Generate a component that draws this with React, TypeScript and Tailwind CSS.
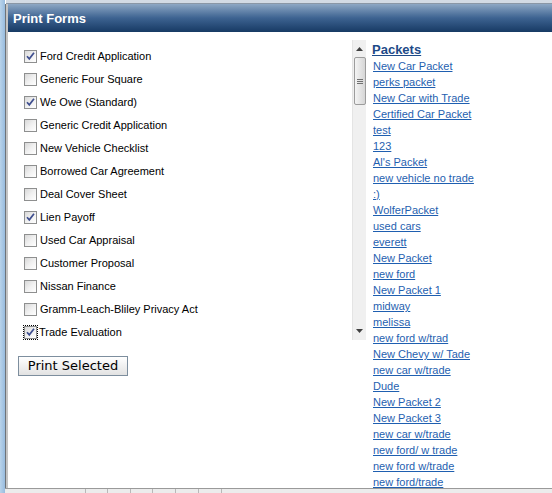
import React from "react";

const forms: { label: string; checked: boolean; focus?: boolean }[] = [
  { label: "Ford Credit Application", checked: true },
  { label: "Generic Four Square", checked: false },
  { label: "We Owe (Standard)", checked: true },
  { label: "Generic Credit Application", checked: false },
  { label: "New Vehicle Checklist", checked: false },
  { label: "Borrowed Car Agreement", checked: false },
  { label: "Deal Cover Sheet", checked: false },
  { label: "Lien Payoff", checked: true },
  { label: "Used Car Appraisal", checked: false },
  { label: "Customer Proposal", checked: false },
  { label: "Nissan Finance", checked: false },
  { label: "Gramm-Leach-Bliley Privacy Act", checked: false },
  { label: "Trade Evaluation", checked: true, focus: true },
];

const packets = [
  "New Car Packet",
  "perks packet",
  "New Car with Trade",
  "Certified Car Packet",
  "test",
  "123",
  "Al's Packet",
  "new vehicle no trade",
  ":)",
  "WolferPacket",
  "used cars",
  "everett",
  "New Packet",
  "new ford",
  "New Packet 1",
  "midway",
  "melissa",
  "new ford w/trad",
  "New Chevy w/ Tade",
  "new car w/trade",
  "Dude",
  "New Packet 2",
  "New Packet 3",
  "new car w/trade",
  "new ford/ w trade",
  "new ford w/trade",
  "new ford/trade",
];

function Checkbox({ checked }: { checked: boolean }) {
  return (
    <span className="relative block w-[13px] h-[13px] shrink-0 border border-[#8e8f8f] bg-gradient-to-br from-[#d8d8d8] via-[#f0f0f0] to-white">
      {checked && (
        <svg width="11" height="11" viewBox="0 0 11 11" className="absolute left-0 top-0">
          <path d="M2 5.2 L4.3 7.8 L9 1.8" fill="none" stroke="#3f4f8f" strokeWidth="1.7" />
        </svg>
      )}
    </span>
  );
}

function Scrollbar() {
  return (
    <div className="w-[14px] h-full flex flex-col items-center bg-[#f0f0f0] border-l border-[#e4e4e4]">
      <div className="h-[17px] w-full flex items-center justify-center">
        <svg width="7" height="4" viewBox="0 0 7 4">
          <path d="M0 4 L3.5 0 L7 4 Z" fill="#404040" />
        </svg>
      </div>
      <div className="w-[12px] h-[48px] rounded-[2px] border border-[#9c9c9c] bg-gradient-to-r from-[#f4f4f4] to-[#d6d6d6] flex flex-col items-center justify-center gap-[1px]">
        <span className="block w-[6px] h-[1px] bg-[#707070]" />
        <span className="block w-[6px] h-[1px] bg-[#707070]" />
        <span className="block w-[6px] h-[1px] bg-[#707070]" />
      </div>
      <div className="flex-1" />
      <div className="h-[18px] w-full flex items-center justify-center">
        <svg width="7" height="4" viewBox="0 0 7 4">
          <path d="M0 0 L3.5 4 L7 0 Z" fill="#404040" />
        </svg>
      </div>
    </div>
  );
}

export default function App() {
  return (
    <div className="w-[552px] h-[493px] overflow-hidden flex bg-white font-['Liberation_Sans',Arial,sans-serif]">
      {/* window edge */}
      <div className="w-[5px] h-full bg-gradient-to-r from-[#b9d3ea] to-[#98bcdf]" />
      <div className="flex-1 flex flex-col min-w-0">
        <div className="h-[4px] bg-[#d3dbe4] border-b border-[#8a97a6] ml-[1px]" />
        <div className="flex flex-1 min-h-0">
          <div className="w-[3px] bg-[#6e7378] border-r-2 border-[#c4c4c4]" />
          <div className="flex-1 flex flex-col min-w-0">
            {/* title bar */}
            <div className="h-[28px] flex items-center pl-[5px] bg-gradient-to-b from-[#8ea8c4] via-[#3d6391] to-[#173a64]">
              <span className="text-white font-bold text-[13px] leading-none">Print Forms</span>
            </div>
            {/* content */}
            <div className="flex-1 flex min-h-0">
              <div className="w-[358px] pl-[10px] flex flex-col">
                <div className="mt-[8px] h-[300px] flex">
                  <div className="flex-1 pt-[5px] pl-[6px] overflow-hidden">
                    {forms.map((f) => (
                      <div key={f.label} className="h-[23px] flex items-center">
                        <span className={f.focus ? "outline outline-1 outline-dotted outline-black" : ""}>
                          <Checkbox checked={f.checked} />
                        </span>
                        <span className={`${f.focus ? "ml-[2px]" : "ml-[3px]"} text-[11px] text-black`}>{f.label}</span>
                      </div>
                    ))}
                  </div>
                  <Scrollbar />
                </div>
                <div className="mt-[13px]">
                  <button className="w-[110px] h-[20px] border border-[#7d8e9e] bg-gradient-to-b from-white to-[#e2e2e2] text-[13px] leading-none text-black font-['DejaVu_Sans',Verdana,sans-serif]">
                    Print Selected
                  </button>
                </div>
              </div>
              <div className="flex-1 pl-[6px] pt-[9px]">
                <div className="h-[16px] leading-[17px] text-[13px] font-bold text-[#1d4a88] underline">Packets</div>
                {packets.map((p, i) => (
                  <div key={i} className="h-[16px] leading-[16px] pl-[1px]">
                    <a className="text-[11px] text-[#1f5fb0] underline cursor-pointer">{p}</a>
                  </div>
                ))}
              </div>
            </div>
          </div>
        </div>
        {/* status strip */}
        <div className="h-[5px] flex border-t border-[#9a9a9a] bg-[#ececec]">
          <div className="w-[81px] border-r border-[#b8b8b8]" />
          <div className="w-[22px] border-r border-[#b8b8b8]" />
          <div className="w-[23px] border-r border-[#b8b8b8]" />
          <div className="w-[22px] border-r border-[#b8b8b8]" />
          <div className="w-[23px] border-r border-[#b8b8b8]" />
          <div className="w-[23px] border-r border-[#b8b8b8]" />
          <div className="w-[23px] border-r border-[#b8b8b8]" />
        </div>
      </div>
    </div>
  );
}
